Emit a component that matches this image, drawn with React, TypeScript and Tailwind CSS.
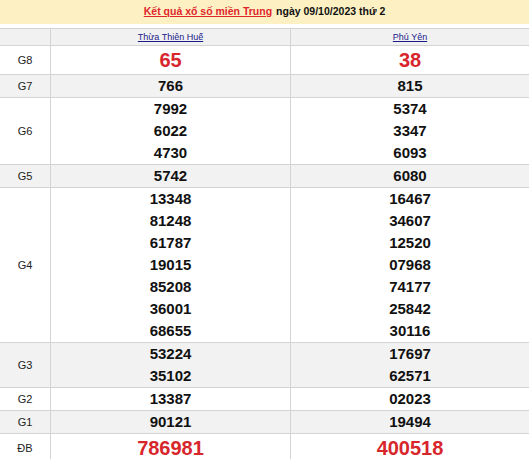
const rows: { label: string; a: string[]; b: string[]; big?: boolean }[] = [
  { label: "G8", a: ["65"], b: ["38"], big: true },
  { label: "G7", a: ["766"], b: ["815"] },
  { label: "G6", a: ["7992", "6022", "4730"], b: ["5374", "3347", "6093"] },
  { label: "G5", a: ["5742"], b: ["6080"] },
  {
    label: "G4",
    a: ["13348", "81248", "61787", "19015", "85208", "36001", "68655"],
    b: ["16467", "34607", "12520", "07968", "74177", "25842", "30116"],
  },
  { label: "G3", a: ["53224", "35102"], b: ["17697", "62571"] },
  { label: "G2", a: ["13387"], b: ["02023"] },
  { label: "G1", a: ["90121"], b: ["19494"] },
  { label: "ĐB", a: ["786981"], b: ["400518"], big: true },
];

function Cell({ nums, big }: { nums: string[]; big?: boolean }) {
  return (
    <div className="flex flex-col items-center justify-center border-l border-[#d4d4d4]">
      {nums.map((n) => (
        <div
          key={n}
          className={
            big
              ? "text-[20px] leading-[28px] font-bold text-[#d7262c]"
              : "text-[15px] leading-[22px] font-bold text-[#111]"
          }
        >
          {n}
        </div>
      ))}
    </div>
  );
}

export default function App() {
  return (
    <div className="w-[529px] h-[459px] overflow-hidden bg-white font-['Liberation_Sans',Arial,sans-serif]">
      <div className="h-6 bg-[#fdf1c4] flex items-center justify-center text-[10.5px] font-bold">
        <a href="#" className="text-[#e0262b] underline">
          Kết quả xổ số miền Trung
        </a>
        <span className="ml-1 text-[#111]">ngày 09/10/2023 thứ 2</span>
      </div>
      <div className="mt-1 border-t border-[#d4d4d4]">
        <div className="grid grid-cols-[50px_240px_239px] bg-[#f1f1f1] h-4 text-[9px] leading-4">
          <div />
          <div className="border-l border-[#d4d4d4] text-center">
            <a href="#" className="text-[#1b1b8a] underline">
              Thừa Thiên Huế
            </a>
          </div>
          <div className="border-l border-[#d4d4d4] text-center">
            <a href="#" className="text-[#1b1b8a] underline">
              Phú Yên
            </a>
          </div>
        </div>
        {rows.map((r, i) => (
          <div
            key={r.label}
            className={
              "grid grid-cols-[50px_240px_239px] border-t border-[#d4d4d4] " +
              (i % 2 === 1 ? "bg-[#f2f2f2]" : "bg-white")
            }
          >
            <div className="flex items-center justify-center text-[11px] text-[#222]">{r.label}</div>
            <Cell nums={r.a} big={r.big} />
            <Cell nums={r.b} big={r.big} />
          </div>
        ))}
      </div>
    </div>
  );
}
